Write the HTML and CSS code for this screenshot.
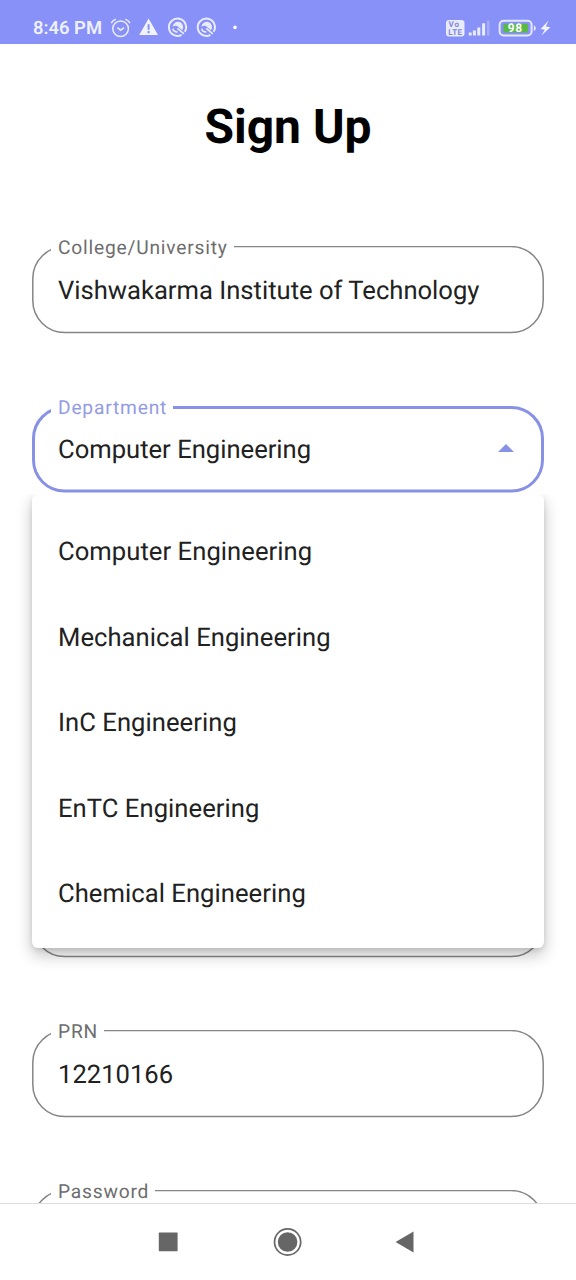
FILE: index.html
```html
<!DOCTYPE html>
<html lang="en">
<head>
<meta charset="utf-8">
<title>Sign Up</title>
<link rel="stylesheet" href="styles.css">
</head>
<body>
<div class="screen">
  <header class="status">
    <span class="clock">8:46 PM</span>
    <svg class="status-left" width="130" height="24" viewBox="110 16 130 24">
      <g fill="none" stroke="#e9ecff" stroke-width="1.5">
        <circle cx="120.6" cy="28.8" r="7.8"/>
        <path d="M117.4 27.6l3.2 2.6 3.4-2.6M111.2 23.2q1.5-3 4.7-4M130 23.2q-1.5-3-4.7-4"/>
      </g>
      <path d="M148.6 18.6l9.4 16.4h-18.8z" fill="#f1f3ff"/>
      <path d="M148.6 24.2v5.6M148.6 31v2.3" stroke="#8791f5" stroke-width="2"/>
      <g id="ring">
        <path d="M181.6 34.8a8.6 8.6 0 1 1 3.2-3" fill="none" stroke="#e9ecff" stroke-width="2"/>
        <path d="M172.6 26.8a5.3 5.3 0 1 1 9.6 3.4l-5.2-4.2q-2-1-4.4.8z" fill="#e9ecff"/>
        <path d="M177.4 28.4l6.6 5.4M172.9 28.6q.6 3.2 4.6 3.6" fill="none" stroke="#e9ecff" stroke-width="1.7"/>
      </g>
      <use href="#ring" x="28.8"/>
      <circle cx="235" cy="27.4" r="1.8" fill="#fff"/>
    </svg>
    <svg class="status-right" width="110" height="24" viewBox="444 16 110 24">
      <rect x="446" y="20" width="18.5" height="16.4" rx="3" fill="#e9ecff"/>
      <g class="volte"><text x="448.6" y="27.4" textLength="10.5">Vo</text><text x="448.3" y="34.8" textLength="13.7">LTE</text></g>
      <path d="M470.2 35.6v-3M474.4 35.6v-5.2M478.8 35.6v-8.2M483.6 35.6v-12.4" stroke="#e9ecff" stroke-width="3"/>
      <path d="M488.2 35.6v-15" stroke="#a5adf8" stroke-width="2.6"/>
      <rect x="499.6" y="20.7" width="32" height="14.8" rx="4" fill="none" stroke="#e4e8fb" stroke-width="2"/>
      <rect x="503.4" y="23.8" width="24.6" height="8.6" rx="1" fill="#58b947"/>
      <path d="M533.8 25.2q2 .8 2 3t-2 3z" fill="#e4e8fb"/>
      <text class="charge" x="507.8" y="32.3" textLength="14.4">98</text>
      <path d="M548.6 20.6l-8 8.4 4.2.7-3.4 5.8 9-8.3-4.6-.8z" fill="#f1f3ff"/>
    </svg>
  </header>

  <main class="form">
    <h1 class="title">Sign Up</h1>
    <div class="field">
      <svg class="outline" width="512" height="88"><rect x=".8" y=".6" width="510.4" height="86" rx="32"/></svg>
      <span class="label">College/University</span>
      <span class="value">Vishwakarma Institute of Technology</span>
    </div>
    <div class="field active">
      <svg class="outline" width="512" height="88"><rect x="1.5" y="1.5" width="509" height="83.6" rx="31"/></svg>
      <span class="label">Department</span>
      <span class="value">Computer Engineering</span>
      <svg class="caret" width="16" height="8"><path d="M0 8L8 0l8 8z"/></svg>
      <ul class="menu">
        <li>Computer Engineering</li>
        <li>Mechanical Engineering</li>
        <li>InC Engineering</li>
        <li>EnTC Engineering</li>
        <li>Chemical Engineering</li>
      </ul>
    </div>
    <div class="field covered">
      <svg class="outline" width="512" height="88"><rect x=".8" y=".6" width="510.4" height="86" rx="32"/></svg>
    </div>
    <div class="field">
      <svg class="outline" width="512" height="88"><rect x=".8" y=".6" width="510.4" height="86" rx="32"/></svg>
      <span class="label">PRN</span>
      <span class="value">12210166</span>
    </div>
    <div class="field">
      <svg class="outline" width="512" height="88"><rect x=".8" y=".6" width="510.4" height="86" rx="32"/></svg>
      <span class="label">Password</span>
    </div>
  </main>

  <nav class="navbar">
    <svg width="576" height="76" viewBox="0 1204 576 76">
      <g fill="#666">
        <rect x="158.8" y="1232.6" width="18.8" height="18.6" rx=".6"/>
        <circle cx="287.6" cy="1242" r="9.8"/>
        <circle cx="287.6" cy="1242" r="13.1" fill="none" stroke="#666" stroke-width="1.7"/>
        <path d="M395.6 1242l17.9-10.5v21z"/>
      </g>
    </svg>
  </nav>
</div>
</body>
</html>
```
FILE: styles.css
```css
* { box-sizing: border-box; }
body {
  margin: 0;
  background: #fff;
  font-family: Roboto, sans-serif;
  text-rendering: geometricPrecision;
}
.screen {
  width: 576px;
  height: 1280px;
  display: flex;
  flex-direction: column;
  overflow: hidden;
}
.status {
  flex: none;
  height: 44px;
  display: flex;
  align-items: center;
  padding: 16px 22px 4px 33px;
  background: #8791f7;
}
.clock {
  width: 77px;
  padding-top: 1px;
  font-size: 18.4px;
  font-weight: 600;
  line-height: 25px;
  white-space: nowrap;
  color: #eef0ff;
}
.status-right { margin-left: auto; }
.volte {
  font-size: 8px;
  font-weight: 700;
  fill: #8088d8;
}
.charge {
  font-size: 12px;
  font-weight: 700;
  fill: #fff;
}
.form {
  flex: 1;
  min-height: 0;
  display: flex;
  flex-direction: column;
  padding: 0 32px;
  overflow: hidden;
}
.title {
  flex: none;
  margin: 51px 0 73px;
  height: 78px;
  font-size: 48px;
  font-weight: 700;
  line-height: 64px;
  text-align: center;
  color: #000;
}
.form .title + .field { margin-top: 0; }
.field {
  position: relative;
  flex: none;
  height: 88px;
  margin-top: 72px;
  padding: 28px 26px 0;
}
.field.active { padding-top: 27px; }
.field.covered { margin-top: 376px; }
.outline {
  position: absolute;
  inset: 0;
  fill: none;
  stroke: #858585;
  stroke-width: 1.5;
}
.label {
  position: absolute;
  left: 19px;
  top: -10px;
  padding: 0 6px 0 7px;
  background: #fff;
  font-size: 19.2px;
  line-height: 24px;
  letter-spacing: 0.8px;
  white-space: nowrap;
  color: #6d6d6d;
}
.value {
  position: relative;
  display: block;
  font-size: 25.6px;
  line-height: 34px;
  white-space: nowrap;
  color: #212121;
}
.active .outline { stroke: #8791e5; stroke-width: 3; }
.active .label { color: #939be3; }
.caret {
  position: absolute;
  left: 466px;
  top: 38px;
  fill: #8791e5;
}
.menu {
  position: absolute;
  z-index: 2;
  left: 0;
  top: 88px;
  width: 512px;
  height: 454px;
  margin: 0;
  padding: 15px 0 11px;
  list-style: none;
  background: #fff;
  border-radius: 6px;
  box-shadow: 0 7px 16px rgba(0,0,0,.24), 0 2px 5px rgba(0,0,0,.1);
  clip-path: inset(0 -40px -40px -40px);
}
.menu li {
  height: 85.6px;
  padding-left: 26px;
  font-size: 25.6px;
  line-height: 86px;
  letter-spacing: 0.05px;
  color: #212121;
}
.navbar {
  flex: none;
  height: 77px;
  border-top: 1px solid #dedede;
  background: #fff;
}
.navbar svg { display: block; }
```
